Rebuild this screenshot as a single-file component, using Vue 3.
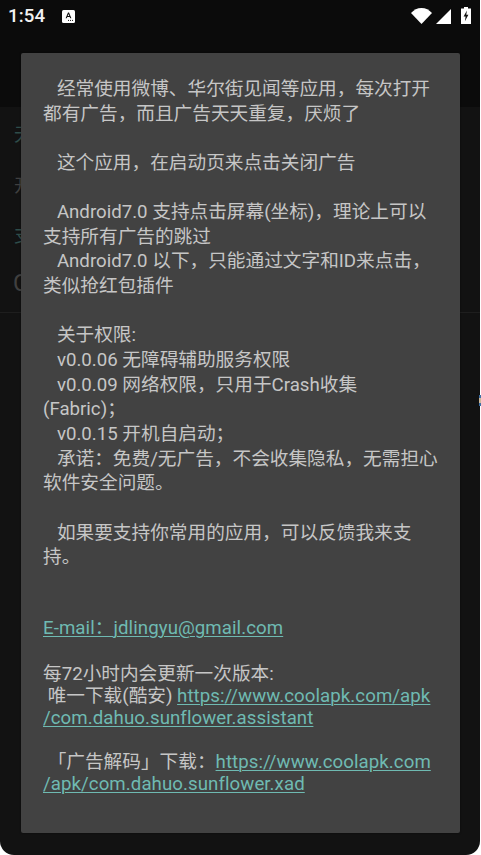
<script setup>
// one entry per displayed line; a dialog in the original breaks lines at these places
const lines = [
  { parts: [{ text: '   经常使用微博、华尔街见闻等应用，每次打开' }] },
  { parts: [{ text: '都有广告，而且广告天天重复，厌烦了' }] },
  { parts: [] },
  { parts: [{ text: '   这个应用，在启动页来点击关闭广告' }] },
  { parts: [] },
  { parts: [{ text: '   Android7.0 支持点击屏幕(坐标)，理论上可以' }] },
  { parts: [{ text: '支持所有广告的跳过' }] },
  { parts: [{ text: '   Android7.0 以下，只能通过文字和ID来点击，' }] },
  { parts: [{ text: '类似抢红包插件' }] },
  { parts: [] },
  { parts: [{ text: '   关于权限:' }] },
  { parts: [{ text: '   v0.0.06 无障碍辅助服务权限' }] },
  { parts: [{ text: '   v0.0.09 网络权限，只用于Crash收集' }] },
  { parts: [{ text: '(Fabric)；' }] },
  { parts: [{ text: '   v0.0.15 开机自启动；' }] },
  { parts: [{ text: '   承诺：免费/无广告，不会收集隐私，无需担心' }] },
  { parts: [{ text: '软件安全问题。' }] },
  { parts: [] },
  { parts: [{ text: '   如果要支持你常用的应用，可以反馈我来支' }] },
  { parts: [{ text: '持。' }] },
  { parts: [], gap: true },
  { parts: [], gap: true },
  { parts: [{ text: 'E-mail：jdlingyu@gmail.com', link: true }] },
  { parts: [], gap: true },
  { parts: [{ text: '每72小时内会更新一次版本:' }], short: true },
  { parts: [{ text: ' 唯一下载(酷安) ' }, { text: 'https://www.coolapk.com/apk', link: true }], short: true },
  { parts: [{ text: '/com.dahuo.sunflower.assistant', link: true }], short: true },
  { parts: [], short: true },
  { parts: [{ text: ' 「广告解码」下载：' }, { text: 'https://www.coolapk.com', link: true }], short: true },
  { parts: [{ text: '/apk/com.dahuo.sunflower.xad', link: true }], short: true }
]
</script>

<template>
  <div class="screen">
    <header class="top">
      <div class="status">
        <span class="clock">1:54</span>
        <svg class="note" viewBox="0 0 13 13" width="13" height="13">
          <rect width="13" height="13" rx="1.5" fill="#fff" />
          <path d="M3.600 8.200 6 2.600h1l2.400 5.600H8.200l-.5-1.300H5.300l-.5 1.300zM5.700 5.900h1.600L6.500 3.900z" fill="#111" />
          <path d="M6 10.400h1M8 10.400h1M10 10.400h1" stroke="#111" stroke-width="1" />
        </svg>
        <span class="spacer"></span>
        <svg class="wifi" viewBox="0 0 21 16" width="21" height="16">
          <path d="M0 5C2.800 1.900 6.400 0 10.500 0S18.200 1.900 21 5L10.500 16z" fill="#fff" />
        </svg>
        <svg class="signal" viewBox="0 0 15 15" width="15" height="15">
          <path d="M0 15 15 0v15z" fill="#fff" />
        </svg>
        <svg class="battery" viewBox="0 0 10 17" width="10" height="17">
          <path d="M3 0h4v1.500h3V17H0V1.500h3z" fill="#fff" />
          <path d="M5.900 3.600 2.600 9.600h2l-.7 4.600 3.500-6.400H5.300z" fill="#111" />
        </svg>
      </div>
    </header>

    <!-- 只露出每行的第一个字，其余被弹窗挡住 -->
    <main class="list">
      <section class="group">
        <p class="title">无</p>
        <p class="sub">开</p>
      </section>
      <section class="group">
        <p class="title">支</p>
        <p class="sub letter">C</p>
      </section>
    </main>

    <div class="dialog">
      <div
        v-for="(line, i) in lines"
        :key="i"
        class="line"
        :class="{ short: line.short, gap: line.gap }"
      >
        <template v-for="(part, j) in line.parts" :key="j">
          <span :class="{ link: part.link }">{{ part.text }}</span>
        </template>
      </div>
    </div>

    <span class="peek"></span>
  </div>
</template>

<style>
html,
body {
  margin: 0;
  background: #fff;
}
</style>

<style scoped>
.screen {
  position: relative;
  width: 479.5px;
  height: 855px;
  background: #121212;
  border-radius: 0 0 14px 14px;
  font-family: Roboto, "Noto Sans CJK SC", sans-serif;
  font-size: 18.67px;
}

.top {
  height: 107px;
  background: #0b0b0b;
}

.status {
  display: flex;
  align-items: center;
  height: 32px;
  padding: 0 9px 0 8px;
  color: #f2f2f2;
}

.clock {
  font-weight: 500;
  letter-spacing: 0.1px;
}

.note {
  margin-left: 17px;
}

.spacer {
  flex: 1;
}

.signal {
  margin-left: 4px;
}

.battery {
  margin-left: 10px;
  margin-top: -1px;
}

.list {
  padding: 0 14px;
  border-bottom: 1px solid #1e1e1e;
  height: 205px;
}

.group {
  padding-top: 16px;
}

.group + .group {
  padding-top: 26px;
}

.title,
.sub {
  margin: 0;
  line-height: 24px;
  white-space: nowrap;
}

.title {
  color: #2f4d4a;
}

.sub {
  margin-top: 27px;
  color: #404040;
}

.group + .group .sub {
  margin-top: 23px;
}

.sub.letter {
  font-size: 24px;
  margin-left: -1px;
}

/* 弹窗盖在列表上面 */
.dialog {
  position: absolute;
  left: 21px;
  top: 53px;
  width: 439px;
  height: 780px;
  box-sizing: border-box;
  padding: 24px 22px 0;
  background: #424242;
  border-radius: 2px;
  color: #c6c6c6;
  box-shadow: 0 0 2px rgba(0, 0, 0, 0.5);
}

.line {
  height: 24.65px;
  line-height: 24.65px;
  white-space: pre;
}

.line.short {
  height: 22px;
  line-height: 22px;
}

.line.gap {
  height: 23px;
}

.link {
  color: #6fbab2;
  letter-spacing: 0.07px;
  text-decoration: underline;
  text-underline-offset: 2px;
  text-decoration-thickness: 1px;
}

/* 右边露出来的一点下层内容 */
.peek {
  position: absolute;
  left: 479px;
  top: 395px;
  width: 2px;
  height: 11px;
  background: linear-gradient(#3d6fa5 0 25%, #cdb899 25% 75%, #3d6fa5 75%);
}
</style>
